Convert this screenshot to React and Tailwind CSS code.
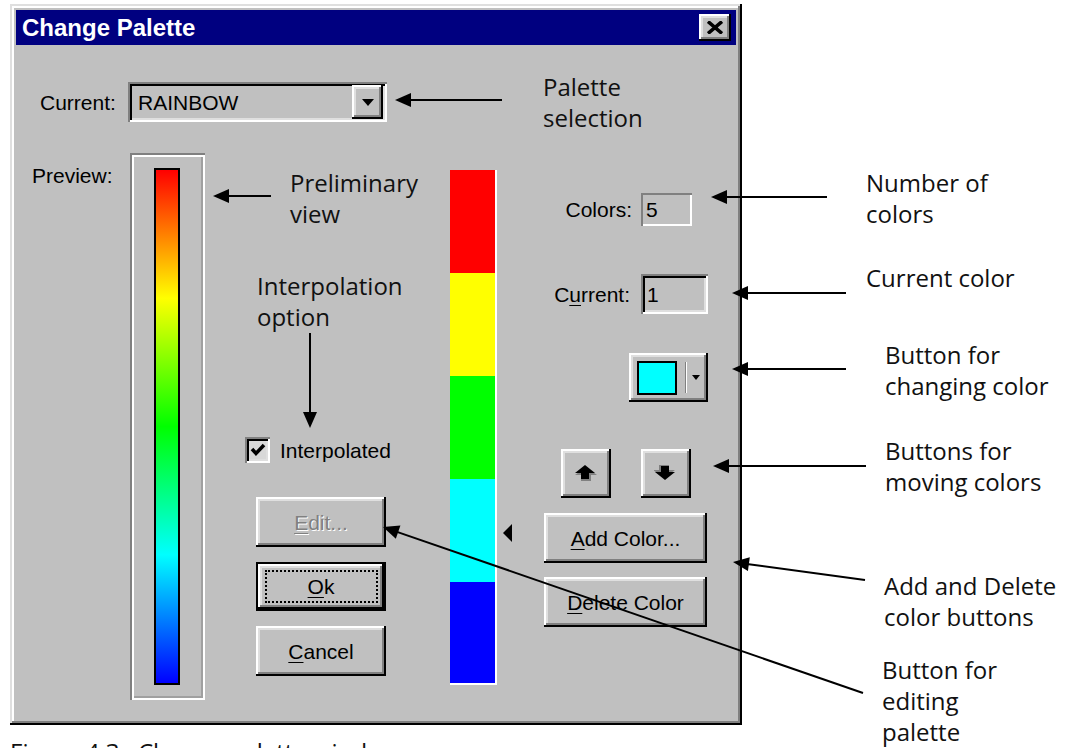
import React from 'react';

const raised =
  'bg-[#c0c0c0] shadow-[inset_-2px_-2px_0_#000,inset_2px_2px_0_#fff,inset_-4px_-4px_0_#808080,inset_4px_4px_0_#dfdfdf]';
const sunken =
  'shadow-[inset_2px_2px_0_#808080,inset_-2px_-2px_0_#fff,inset_4px_4px_0_#000,inset_-4px_-4px_0_#dfdfdf]';

const WinButton = ({ className = '', children }) => (
  <div className={`flex items-center justify-center text-[21px] leading-none text-black ${raised} ${className}`}>
    {children}
  </div>
);

const U = ({ children }) => <span className="underline underline-offset-[3px] decoration-1">{children}</span>;

// arrow from tail (x1,y1) to tip (x2,y2)
const Arrow = ({ x1, y1, x2, y2 }) => {
  const dx = x2 - x1;
  const dy = y2 - y1;
  const len = Math.sqrt(dx * dx + dy * dy);
  const ux = dx / len;
  const uy = dy / len;
  const hl = 16;
  const hw = 7;
  const bx = x2 - ux * hl;
  const by = y2 - uy * hl;
  const pts = `${x2},${y2} ${bx - uy * hw},${by + ux * hw} ${bx + uy * hw},${by - ux * hw}`;
  return (
    <g>
      <line x1={x1} y1={y1} x2={bx + ux * 2} y2={by + uy * 2} stroke="#000" strokeWidth="2" />
      <polygon points={pts} fill="#000" />
    </g>
  );
};

const Note = ({ left, top, children }) => (
  <div
    className="absolute font-['Open_Sans',sans-serif] text-[24px] leading-[31px] text-[#111] whitespace-nowrap"
    style={{ left, top }}
  >
    {children}
  </div>
);

const MoveArrow = ({ down }) => (
  <svg width="24" height="17" viewBox="0 0 24 17">
    <g transform={down ? 'rotate(180 11 7.5)' : undefined}>
      <polygon points="12,2 23,10 17,10 17,16 7,16 7,10 1,10" fill="#808080" />
      <polygon points="11,0 21,8 15,8 15,14 7,14 7,8 1,8" fill="#000" />
    </g>
  </svg>
);

export default function App() {
  return (
    <div className="relative w-[1072px] h-[748px] overflow-hidden bg-white font-['Liberation_Sans',Arial,sans-serif]">
      <div className="pl-[10px] pt-[4px]">
        {/* Dialog */}
        <div className="w-[732px] h-[721px] p-[6px] flex flex-col bg-[#c0c0c0] shadow-[inset_-2px_-2px_0_#000,inset_2px_2px_0_#dfdfdf,inset_-4px_-4px_0_#808080,inset_4px_4px_0_#fff]">
          {/* Title bar */}
          <div className="h-[35px] bg-[#000080] flex items-center justify-between pl-[6px] pr-[5px]">
            <span className="text-white text-[24px] font-bold leading-none">Change Palette</span>
            <WinButton className="w-[32px] h-[27px]">
              <svg width="16" height="13" viewBox="0 0 16 13">
                <path d="M1 0.5 L15 12.5 M15 0.5 L1 12.5" stroke="#000" strokeWidth="3.5" />
              </svg>
            </WinButton>
          </div>

          {/* Palette selection */}
          <div className="mt-[37px] flex items-center h-[40px] text-[21px] leading-none text-black">
            <span className="ml-[24px] w-[88px]">Current:</span>
            <div className={`w-[259px] h-[40px] flex items-center pl-[10px] pr-[4px] ${sunken}`}>
              <span className="flex-1">RAINBOW</span>
              <WinButton className="w-[31px] h-[34px]">
                <svg width="12" height="7" viewBox="0 0 12 7">
                  <polygon points="0,0 12,0 6,7" fill="#000" />
                </svg>
              </WinButton>
            </div>
          </div>

          {/* Main area */}
          <div className="mt-[31px] flex items-start text-[21px] leading-none text-black">
            <div className="ml-[16px] w-[98px] mt-[12px]">Preview:</div>

            <div className="w-[75px] h-[547px] shadow-[inset_2px_2px_0_#808080,inset_4px_4px_0_#fff,inset_-2px_-2px_0_#fff,inset_-4px_-4px_0_#a0a0a0]">
              <div className="mt-[15px] ml-[24px] w-[26px] h-[517px] border-2 border-black bg-[linear-gradient(to_bottom,#ff0000,#ffff00,#00ff00,#00ffff,#0000ff)]" />
            </div>

            <div className="w-[245px] flex flex-col">
              <div className="mt-[284px] ml-[40px] flex items-center h-[26px] gap-[10px]">
                <div className={`w-[25px] h-[26px] flex items-center justify-center bg-[#d8d8d8] ${sunken}`}>
                  <svg width="16" height="14" viewBox="0 0 16 14">
                    <path d="M2 6 L6 10.5 L14 2" stroke="#000" strokeWidth="3.5" fill="none" />
                  </svg>
                </div>
                <span>Interpolated</span>
              </div>
              <WinButton className="mt-[34px] ml-[51px] w-[130px] h-[50px]">
                <span className="text-[#808080] [text-shadow:1px_1px_0_#fff]">
                  <U>E</U>dit...
                </span>
              </WinButton>
              <div className="mt-[15px] ml-[51px] w-[130px] h-[49px] border-2 border-black">
                <div className={`w-full h-full flex items-center justify-center ${raised}`}>
                  <div className="w-[113px] h-[33px] border-2 border-dotted border-black flex items-center justify-center">
                    <span>
                      <U>O</U>k
                    </span>
                  </div>
                </div>
              </div>
              <WinButton className="mt-[15px] ml-[51px] w-[130px] h-[50px]">
                <span>
                  <U>C</U>ancel
                </span>
              </WinButton>
            </div>

            <div className="flex items-start">
              <div className="mt-[17px] w-[47px] h-[515px] flex flex-col shadow-[inset_-2px_-2px_0_#fff]">
                <div className="h-[103px] bg-[#ff0000] mr-[2px]" />
                <div className="h-[103px] bg-[#ffff00] mr-[2px]" />
                <div className="h-[103px] bg-[#00ff00] mr-[2px]" />
                <div className="h-[103px] bg-[#00ffff] mr-[2px]" />
                <div className="h-[101px] bg-[#0000ff] mr-[2px]" />
              </div>
              <svg className="ml-[6px] mt-[371px]" width="9" height="18" viewBox="0 0 9 18">
                <polygon points="9,0 9,18 0,9" fill="#000" />
              </svg>
            </div>

            <div className="ml-[32px] w-[164px] flex flex-col">
              <div className="mt-[40px] flex items-center h-[33px]">
                <span className="w-[97px] text-right pr-[9px]">Colors:</span>
                <div className="w-[51px] h-[33px] flex items-center pl-[5px] shadow-[inset_2px_2px_0_#808080,inset_-2px_-2px_0_#fff]">
                  5
                </div>
              </div>
              <div className="mt-[48px] flex items-center h-[40px]">
                <span className="w-[97px] text-right pr-[11px]">
                  C<U>u</U>rrent:
                </span>
                <div className={`w-[67px] h-[40px] flex items-center pl-[6px] ${sunken}`}>1</div>
              </div>
              <div className={`mt-[39px] ml-[85px] w-[79px] h-[49px] flex items-center pl-[8px] ${raised}`}>
                <div className="w-[40px] h-[34px] border-2 border-black bg-[#00ffff]" />
                <div className="ml-[8px] w-[2px] h-[31px] border-l border-l-[#808080] border-r border-r-white" />
                <svg className="ml-[5px]" width="8" height="5" viewBox="0 0 8 5">
                  <polygon points="0,0 8,0 4,5" fill="#000" />
                </svg>
              </div>
              <div className="mt-[47px] ml-[17px] flex gap-[30px]">
                <WinButton className="w-[50px] h-[49px]">
                  <MoveArrow />
                </WinButton>
                <WinButton className="w-[50px] h-[49px]">
                  <MoveArrow down />
                </WinButton>
              </div>
              <WinButton className="mt-[15px] w-[163px] h-[50px]">
                <span>
                  <U>A</U>dd Color...
                </span>
              </WinButton>
              <WinButton className="mt-[14px] w-[163px] h-[50px]">
                <span>
                  <U>D</U>elete Color
                </span>
              </WinButton>
            </div>
          </div>
        </div>
      </div>

      {/* Figure caption, cut off by the page edge as in the scan */}
      <div className="mt-[11px] flex font-['Open_Sans',sans-serif] text-[24px] leading-[31px] text-[#111]">
        <span className="ml-[10px] w-[128px]">Figure 4.3</span>
        <span>Change palette window</span>
      </div>

      {/* Callouts */}
      <Note left={543} top={71}>
        Palette
        <br />
        selection
      </Note>
      <Note left={290} top={167}>
        Preliminary
        <br />
        view
      </Note>
      <Note left={257} top={270}>
        Interpolation
        <br />
        option
      </Note>
      <Note left={866} top={167}>
        Number of
        <br />
        colors
      </Note>
      <Note left={866} top={262}>
        Current color
      </Note>
      <Note left={885} top={339}>
        Button for
        <br />
        changing color
      </Note>
      <Note left={885} top={435}>
        Buttons for
        <br />
        moving colors
      </Note>
      <Note left={884} top={570}>
        Add and Delete
        <br />
        color buttons
      </Note>
      <Note left={882} top={654}>
        Button for
        <br />
        editing
        <br />
        palette
      </Note>

      <svg className="absolute left-0 top-0 pointer-events-none" width="1072" height="748">
        <Arrow x1={502} y1={100} x2={395} y2={100} />
        <Arrow x1={271} y1={196} x2={213} y2={196} />
        <Arrow x1={310} y1={333} x2={310} y2={428} />
        <Arrow x1={827} y1={197} x2={711} y2={197} />
        <Arrow x1={846} y1={293} x2={732} y2={293} />
        <Arrow x1={846} y1={369} x2={732} y2={369} />
        <Arrow x1={866} y1={466} x2={713} y2={466} />
        <Arrow x1={865} y1={580} x2={733} y2={562} />
        <Arrow x1={863} y1={693} x2={383} y2={527} />
      </svg>
    </div>
  );
}
